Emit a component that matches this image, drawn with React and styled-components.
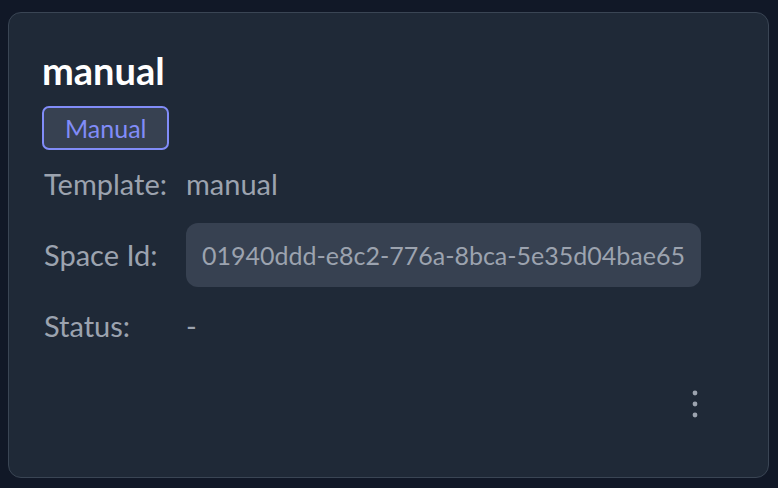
import styled, { createGlobalStyle } from "styled-components";

const GlobalStyle = createGlobalStyle`
  html, body {
    margin: 0;
    padding: 0;
    background: #111827;
  }
  body {
    font-family: "Lato", "Noto Sans", sans-serif;
  }
`;

const Page = styled.div`
  width: 778px;
  height: 488px;
  box-sizing: border-box;
  padding: 12px 9px 10px 8px;
  display: flex;
`;

const Card = styled.section`
  flex: 1;
  box-sizing: border-box;
  background: #1f2937;
  border: 1px solid #3a4554;
  border-radius: 13px;
  padding: 35px 33px 0 33px;
  display: flex;
  flex-direction: column;
`;

const Title = styled.h2`
  margin: 0;
  font-size: 38px;
  line-height: 44px;
  font-weight: 700;
  color: #ffffff;
`;

const Badge = styled.span`
  align-self: flex-start;
  margin-top: 14px;
  box-sizing: border-box;
  height: 44px;
  padding: 0 21px;
  display: inline-flex;
  align-items: center;
  border: 2px solid #818cf8;
  border-radius: 7px;
  background: #374151;
  color: #818cf8;
  font-size: 25px;
  font-weight: 400;
`;

const Details = styled.dl`
  margin: 2px 0 0 2px;
  display: grid;
  grid-template-columns: 142px auto;
  grid-auto-rows: 64px;
  justify-content: start;
  align-items: center;
  row-gap: 7px;
`;

const Label = styled.dt`
  margin: 0;
  font-size: 29px;
  line-height: 36px;
  color: #9ca3af;
`;

const Value = styled.dd`
  margin: 0;
  font-size: 29px;
  line-height: 36px;
  color: #9ca3af;
`;

const IdPill = styled.dd`
  margin: 0;
  height: 64px;
  box-sizing: border-box;
  padding: 0 16px;
  display: flex;
  align-items: center;
  background: #374151;
  border-radius: 12px;
  font-size: 25px;
  color: #9ca3af;
`;

const Footer = styled.div`
  margin-top: auto;
  display: flex;
  justify-content: flex-end;
  padding: 0 26px 55px 0;
`;

const MenuButton = styled.button`
  width: 28px;
  height: 36px;
  padding: 0;
  border: none;
  background: transparent;
  display: flex;
  align-items: center;
  justify-content: center;
  color: #9ca3af;
  cursor: pointer;
`;

const DotsIcon = () => (
  <svg width="6" height="28" viewBox="0 0 6 28">
    <circle cx="3" cy="3" r="2.4" fill="currentColor" />
    <circle cx="3" cy="14" r="2.4" fill="currentColor" />
    <circle cx="3" cy="25" r="2.4" fill="currentColor" />
  </svg>
);

export default function App() {
  return (
    <>
      <GlobalStyle />
      <Page>
        <Card>
          <Title>manual</Title>
          <Badge>Manual</Badge>
          <Details>
            <Label>Template:</Label>
            <Value>manual</Value>
            <Label>Space Id:</Label>
            <IdPill>01940ddd-e8c2-776a-8bca-5e35d04bae65</IdPill>
            <Label>Status:</Label>
            <Value>-</Value>
          </Details>
          <Footer>
            <MenuButton aria-label="More actions">
              <DotsIcon />
            </MenuButton>
          </Footer>
        </Card>
      </Page>
    </>
  );
}
